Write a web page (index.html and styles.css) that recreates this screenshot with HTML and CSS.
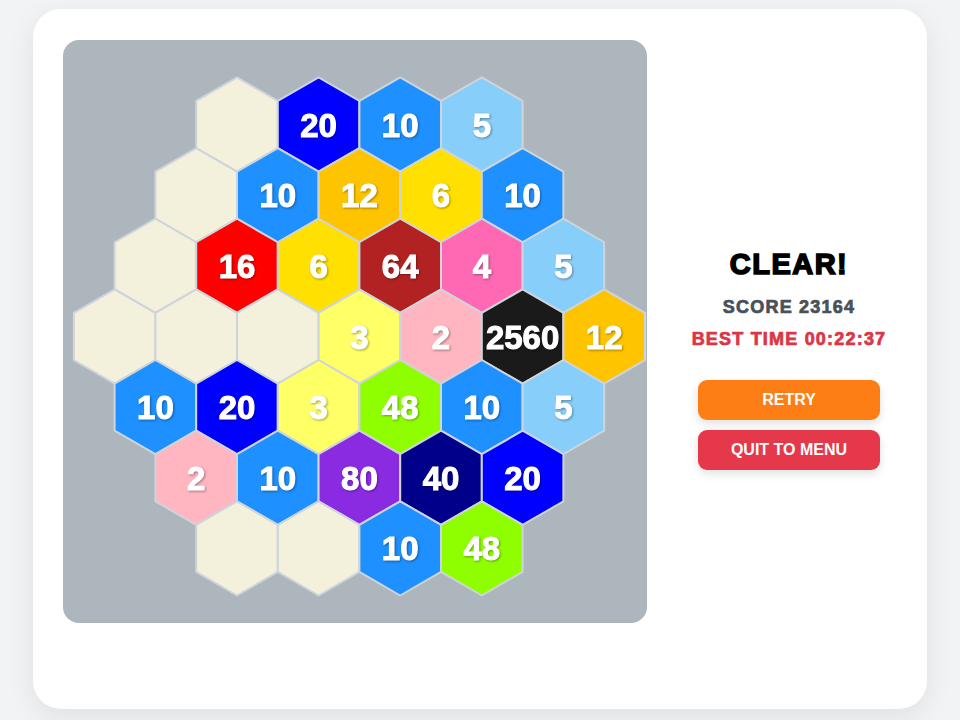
FILE: index.html
```html
<!DOCTYPE html>
<html lang="en">
<head>
<meta charset="utf-8">
<title>Hex Merge – Clear</title>
<link rel="stylesheet" href="styles.css">
</head>
<body>
<main class="card">
  <section class="board">
    <svg class="board-svg" viewBox="0 0 584 583" width="584" height="583">
      <defs>
        <polygon id="hex" points="0,-47.1 40.79,-23.55 40.79,23.55 0,47.1 -40.79,23.55 -40.79,-23.55"/>
      </defs>

      <!-- row 1 -->
      <g transform="translate(174,84.5)"><use href="#hex" class="c-empty"/></g>
      <g transform="translate(255.6,84.5)"><use href="#hex" class="c-20"/><text y="12">20</text></g>
      <g transform="translate(337.2,84.5)"><use href="#hex" class="c-10"/><text y="12">10</text></g>
      <g transform="translate(418.8,84.5)"><use href="#hex" class="c-5"/><text y="12">5</text></g>

      <!-- row 2 -->
      <g transform="translate(133.2,155.2)"><use href="#hex" class="c-empty"/></g>
      <g transform="translate(214.8,155.2)"><use href="#hex" class="c-10"/><text y="12">10</text></g>
      <g transform="translate(296.4,155.2)"><use href="#hex" class="c-12"/><text y="12">12</text></g>
      <g transform="translate(378,155.2)"><use href="#hex" class="c-6"/><text y="12">6</text></g>
      <g transform="translate(459.6,155.2)"><use href="#hex" class="c-10"/><text y="12">10</text></g>

      <!-- row 3 -->
      <g transform="translate(92.4,225.8)"><use href="#hex" class="c-empty"/></g>
      <g transform="translate(174,225.8)"><use href="#hex" class="c-16"/><text y="12">16</text></g>
      <g transform="translate(255.6,225.8)"><use href="#hex" class="c-6"/><text y="12">6</text></g>
      <g transform="translate(337.2,225.8)"><use href="#hex" class="c-64"/><text y="12">64</text></g>
      <g transform="translate(418.8,225.8)"><use href="#hex" class="c-4"/><text y="12">4</text></g>
      <g transform="translate(500.4,225.8)"><use href="#hex" class="c-5"/><text y="12">5</text></g>

      <!-- row 4 -->
      <g transform="translate(51.6,296.5)"><use href="#hex" class="c-empty"/></g>
      <g transform="translate(133.2,296.5)"><use href="#hex" class="c-empty"/></g>
      <g transform="translate(214.8,296.5)"><use href="#hex" class="c-empty"/></g>
      <g transform="translate(296.4,296.5)"><use href="#hex" class="c-3"/><text y="12">3</text></g>
      <g transform="translate(378,296.5)"><use href="#hex" class="c-2"/><text y="12">2</text></g>
      <g transform="translate(459.6,296.5)"><use href="#hex" class="c-2560"/><text y="12">2560</text></g>
      <g transform="translate(541.2,296.5)"><use href="#hex" class="c-12"/><text y="12">12</text></g>

      <!-- row 5 -->
      <g transform="translate(92.4,367.1)"><use href="#hex" class="c-10"/><text y="12">10</text></g>
      <g transform="translate(174,367.1)"><use href="#hex" class="c-20"/><text y="12">20</text></g>
      <g transform="translate(255.6,367.1)"><use href="#hex" class="c-3"/><text y="12">3</text></g>
      <g transform="translate(337.2,367.1)"><use href="#hex" class="c-48"/><text y="12">48</text></g>
      <g transform="translate(418.8,367.1)"><use href="#hex" class="c-10"/><text y="12">10</text></g>
      <g transform="translate(500.4,367.1)"><use href="#hex" class="c-5"/><text y="12">5</text></g>

      <!-- row 6 -->
      <g transform="translate(133.2,437.8)"><use href="#hex" class="c-2"/><text y="12">2</text></g>
      <g transform="translate(214.8,437.8)"><use href="#hex" class="c-10"/><text y="12">10</text></g>
      <g transform="translate(296.4,437.8)"><use href="#hex" class="c-80"/><text y="12">80</text></g>
      <g transform="translate(378,437.8)"><use href="#hex" class="c-40"/><text y="12">40</text></g>
      <g transform="translate(459.6,437.8)"><use href="#hex" class="c-20"/><text y="12">20</text></g>

      <!-- row 7 -->
      <g transform="translate(174,508.4)"><use href="#hex" class="c-empty"/></g>
      <g transform="translate(255.6,508.4)"><use href="#hex" class="c-empty"/></g>
      <g transform="translate(337.2,508.4)"><use href="#hex" class="c-10"/><text y="12">10</text></g>
      <g transform="translate(418.8,508.4)"><use href="#hex" class="c-48"/><text y="12">48</text></g>
    </svg>
  </section>

  <aside class="result">
    <h1 class="result-title">CLEAR!</h1>
    <p class="result-score">SCORE 23164</p>
    <p class="result-best">BEST TIME 00:22:37</p>
    <div class="result-actions">
      <button class="btn btn-retry" type="button">RETRY</button>
      <button class="btn btn-quit" type="button">QUIT TO MENU</button>
    </div>
  </aside>
</main>
</body>
</html>
```

FILE: styles.css
```css
* {
  box-sizing: border-box;
}

html,
body {
  margin: 0;
  height: 100%;
}

body {
  background: #f1f3f5;
  padding: 9px 33px;
  font-family: "Liberation Sans", Arial, sans-serif;
}

.card {
  display: flex;
  gap: 34px;
  width: 894px;
  height: 700px;
  padding: 31px 30px;
  background: #ffffff;
  border-radius: 28px;
  box-shadow: 0 8px 28px rgba(0, 0, 0, 0.08);
}

/* ---------- board ---------- */

.board {
  flex: none;
  width: 584px;
  height: 583px;
  background: #adb5bd;
  border-radius: 16px;
  overflow: hidden;
}

.board-svg {
  display: block;
}

.board-svg use {
  stroke: #ced4da;
  stroke-width: 2;
  stroke-linejoin: round;
}

.board-svg text {
  fill: #ffffff;
  stroke: #ffffff;
  stroke-width: 1;
  font-family: "Liberation Sans", Arial, sans-serif;
  font-weight: 700;
  font-size: 33px;
  text-anchor: middle;
  filter: drop-shadow(1px 1px 1px rgba(0, 0, 0, 0.35));
}

.c-empty { fill: #f3f0dc; }
.c-2     { fill: #ffb6c1; }
.c-3     { fill: #ffff66; }
.c-4     { fill: #ff69b4; }
.c-5     { fill: #87cefa; }
.c-6     { fill: #ffe000; }
.c-10    { fill: #1e90ff; }
.c-12    { fill: #ffc400; }
.c-16    { fill: #ff0000; }
.c-20    { fill: #0000ff; }
.c-40    { fill: #00008b; }
.c-48    { fill: #8fff00; }
.c-64    { fill: #b22222; }
.c-80    { fill: #8a2be2; }
.c-2560  { fill: #1a1a1a; }

/* ---------- result panel ---------- */

.result {
  flex: 1;
  align-self: center;
  display: flex;
  flex-direction: column;
  align-items: center;
  text-align: center;
}

.result-title {
  margin: 0;
  font-size: 29px;
  line-height: 32px;
  font-weight: 700;
  letter-spacing: 1.5px;
  color: #000000;
  -webkit-text-stroke: 1.6px #000000;
}

.result-score,
.result-best {
  margin: 0;
  font-size: 18px;
  line-height: 22px;
  font-weight: 700;
  letter-spacing: 1.2px;
}

.result-score {
  margin-top: 16px;
  color: #495057;
  -webkit-text-stroke: 0.7px #495057;
}

.result-best {
  margin-top: 10px;
  color: #dc3545;
  -webkit-text-stroke: 0.7px #dc3545;
}

.result-actions {
  margin-top: 30px;
  display: flex;
  flex-direction: column;
  gap: 10px;
}

.btn {
  width: 182px;
  height: 40px;
  border: 0;
  border-radius: 9px;
  color: #ffffff;
  font-family: "Liberation Sans", Arial, sans-serif;
  font-size: 16px;
  font-weight: 700;
  box-shadow: 0 4px 10px rgba(0, 0, 0, 0.12);
  cursor: pointer;
}

.btn-retry {
  background: #fd7e14;
}

.btn-quit {
  background: #e5384a;
}
```
